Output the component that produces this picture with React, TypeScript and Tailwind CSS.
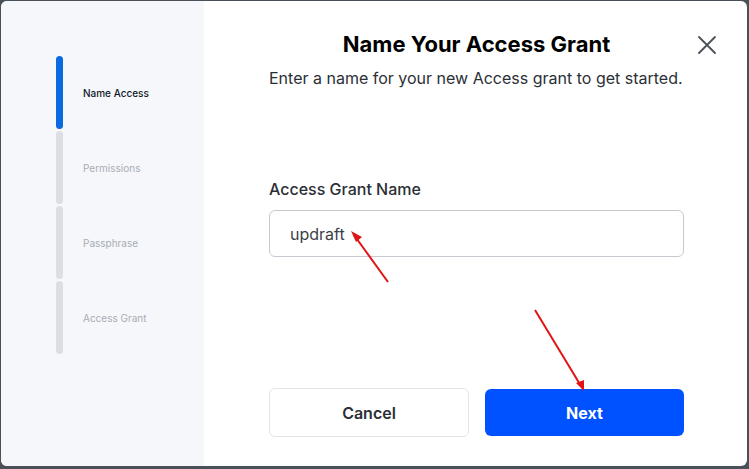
import React from "react";

export default function App() {
  const steps = [
    { label: "Name Access", active: true },
    { label: "Permissions", active: false },
    { label: "Passphrase", active: false },
    { label: "Access Grant", active: false },
  ];
  return (
    <div
      className="w-[749px] h-[469px] bg-[#4a5058] pt-[1px] pl-[1px] pr-[2px] pb-[3px] overflow-hidden"
      style={{ fontFamily: "Inter, 'Noto Sans', sans-serif" }}
    >
      <div className="relative w-full h-full bg-white rounded-[6px] overflow-hidden flex">
        <aside className="w-[203px] shrink-0 bg-[#f5f7fa] pt-[55px] pl-[55px] flex flex-col gap-[2px]">
          {steps.map((s) => (
            <div key={s.label} className="flex items-center h-[73px]">
              <div
                className={
                  s.active
                    ? "w-[7px] h-full rounded-full bg-[#0a6be0]"
                    : "w-[7px] h-full rounded-full bg-[#dcdee3]"
                }
              />
              <span
                className={
                  s.active
                    ? "ml-[20px] mt-[2px] text-[10px] font-medium text-[#111827]"
                    : "ml-[20px] mt-[2px] text-[10px] text-[#a8adb7]"
                }
              >
                {s.label}
              </span>
            </div>
          ))}
        </aside>

        <main className="flex-1 flex flex-col pl-[65px] pr-[64px]">
          <h1 className="mt-[29px] text-center text-[22px] leading-[28px] font-bold text-black">
            Name Your Access Grant
          </h1>
          <p className="mt-[9px] text-[16px] leading-[22px] text-[#2b2f36]">
            Enter a name for your new Access grant to get started.
          </p>

          <label className="mt-[90px] text-[16px] leading-[20px] font-medium text-[#2b2f36]">
            Access Grant Name
          </label>
          <div className="mt-[11px] h-[47px] rounded-[6px] border border-[#c6c9cf] flex items-center pl-[20px] text-[16px] text-[#3b3f46]">
            updraft
          </div>

          <div className="mt-[131px] flex gap-[16px]">
            <button className="w-[200px] h-[49px] rounded-[6px] border border-[#e2e4e8] bg-white text-[16px] font-semibold text-[#2b2f36]">
              Cancel
            </button>
            <button className="w-[199px] h-[47px] mt-[1px] rounded-[6px] bg-[#0051ff] text-[16px] font-bold text-white">
              Next
            </button>
          </div>
        </main>

        <button className="absolute left-[696px] top-[34px] w-[20px] h-[20px] flex items-center justify-center">
          <svg width="20" height="20" viewBox="0 0 20 20" fill="none" stroke="#4b5058" strokeWidth="1.8" strokeLinecap="round">
            <path d="M2 2 L18 18 M18 2 L2 18" />
          </svg>
        </button>

        <svg className="absolute left-0 top-0 pointer-events-none" width="749" height="469" viewBox="0 0 749 469">
          <g transform="translate(-1,-1)">
            <line x1="388" y1="282" x2="354" y2="235" stroke="#e01414" strokeWidth="2" />
            <path d="M351 231 L362 237 L356 242 Z" fill="#e01414" />
            <line x1="535" y1="310" x2="581" y2="386" stroke="#e01414" strokeWidth="2" />
            <path d="M584 391 L576 383 L584 380 Z" fill="#e01414" />
          </g>
        </svg>
      </div>
    </div>
  );
}
